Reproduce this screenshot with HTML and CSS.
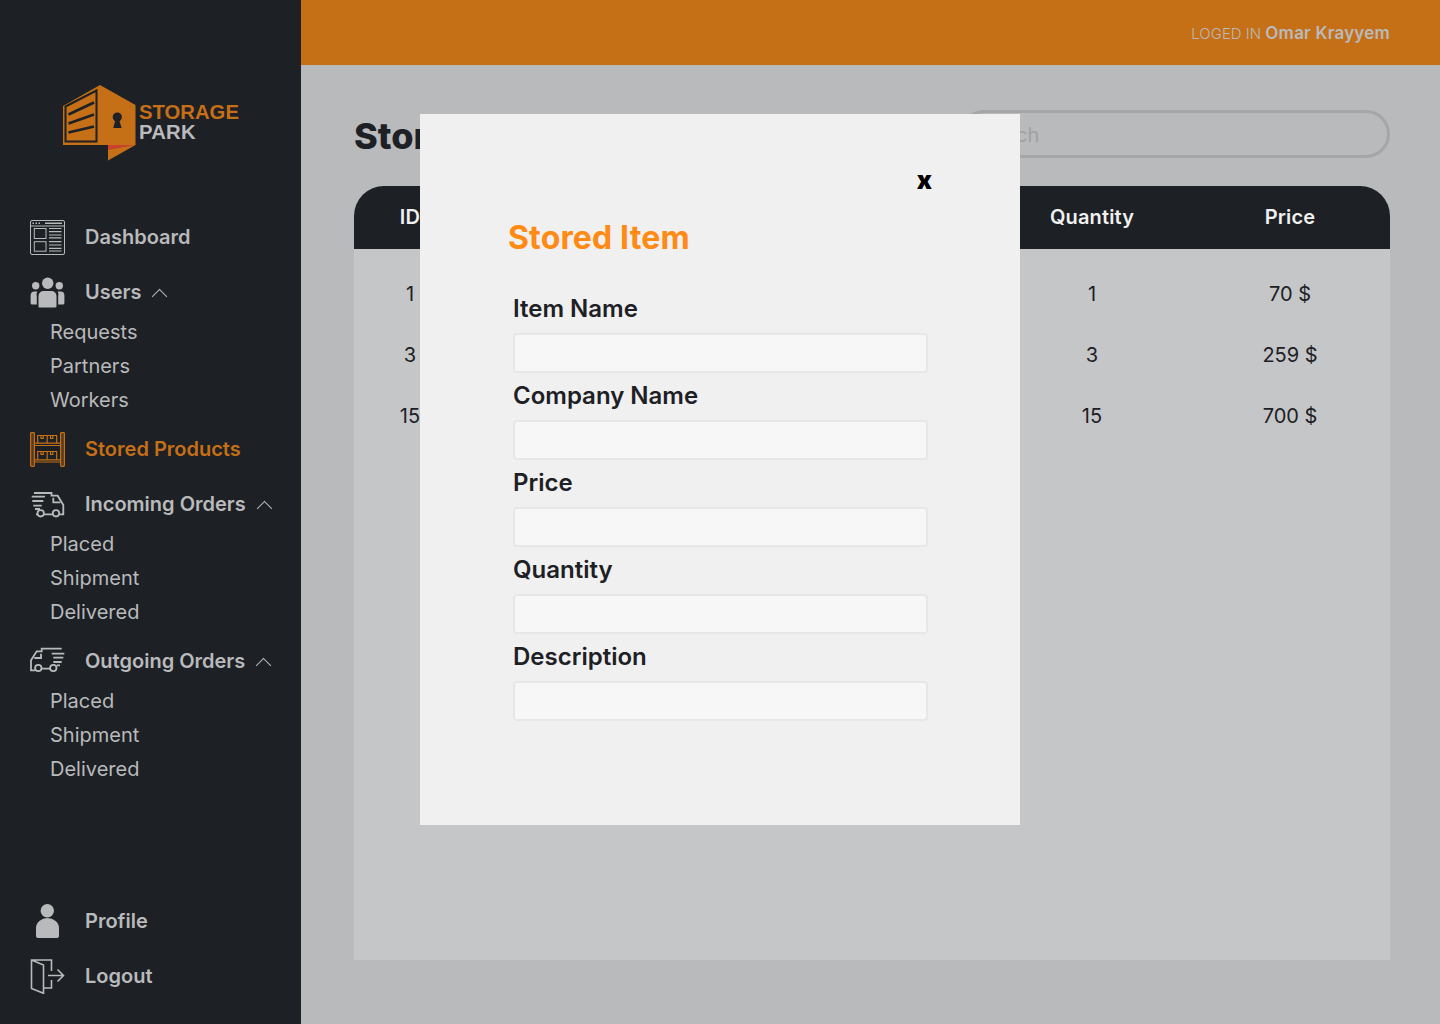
FILE: index.html
```html
<!DOCTYPE html>
<html lang="en">
<head>
    <meta charset="UTF-8">
    <meta name="viewport" content="width=device-width, initial-scale=1.0">
    <title>Storage Park - Stored Products</title>
    <link rel="stylesheet" href="styles.css">
</head>
<body>
    <div class="app">
        <aside class="sidebar">
            <div class="logo">
                <svg class="logo-mark" width="73" height="76" viewBox="0 0 73 76">
                    <polygon points="37,0 72.5,20 72.5,60 45,75.5 45,60 0,60 0,21" fill="#c56f17"/>
                    <polygon points="45,60 72,60 45,65" fill="#c9432a"/>
                    <polygon points="2.5,21.5 33.5,5.5 33.5,56.5 2.5,56.5" fill="none" stroke="#1d2025" stroke-width="2"/>
                    <path d="M5.5 29.5 31 17.5M5.5 38.5 31 29.5M5.5 47.5 31 41.5" stroke="#1d2025" stroke-width="2.8"/>
                    <circle cx="54.3" cy="32" r="4.6" fill="#1d2025"/>
                    <polygon points="53,33 55.6,33 58.6,43 50.2,43" fill="#1d2025"/>
                </svg>
                <div class="logo-text">
                    <span class="logo-top">STORAGE</span>
                    <span class="logo-bottom">PARK</span>
                </div>
            </div>

            <nav class="nav">
                <a class="nav-item">
                    <svg class="nav-icon" viewBox="0 0 35 35" fill="none" stroke="#b9babb">
                        <rect x="0.5" y="0.5" width="34" height="34" rx="1.5" stroke-width="1"/>
                        <path d="M0.5 6H34.5" stroke-width="1"/>
                        <path d="M2.5 3.2H4M5.5 3.2H7M8.5 3.2H10M15 3.2H32" stroke-width="1.4"/>
                        <rect x="4.3" y="8.5" width="11.7" height="10" stroke-width="1"/>
                        <rect x="4.3" y="21.7" width="11.7" height="9.5" stroke-width="1"/>
                        <path d="M19 8.5H31.5M19 11.7H31.5M19 15H31.5M19 17.8H31.5M19 21.7H31.5M19 25H31.5M19 28.3H31.5M19 31H31.5" stroke-width="1.2"/>
                    </svg>
                    <span>Dashboard</span>
                </a>

                <a class="nav-item">
                    <svg class="nav-icon" viewBox="0 0 35 35" fill="#b9babb">
                        <circle cx="17.7" cy="8.3" r="5.7"/>
                        <circle cx="5.7" cy="10.7" r="3.7"/>
                        <circle cx="29.3" cy="10.7" r="3.7"/>
                        <path d="M8.5 21a5 5 0 0 1 5-5h8a5 5 0 0 1 5 5v10a1.5 1.5 0 0 1-1.5 1.5h-16A1.5 1.5 0 0 1 8.5 31z"/>
                        <path d="M7.3 16.5H4.5A4 4 0 0 0 .6 20.5V28a1.5 1.5 0 0 0 1.5 1.5H6.8V21a6 6 0 0 1 .5-4.500z"/>
                        <path d="M27.7 16.5H30.5A4 4 0 0 1 34.4 20.5V28a1.5 1.5 0 0 1-1.5 1.5H28.2V21a6 6 0 0 0-.5-4.500z"/>
                    </svg>
                    <span>Users</span>
                    <i class="chevron"></i>
                </a>
                <div class="sub-list">
                    <a class="sub-item">Requests</a>
                    <a class="sub-item">Partners</a>
                    <a class="sub-item">Workers</a>
                </div>

                <a class="nav-item active">
                    <svg class="nav-icon" viewBox="0 0 35 35" fill="none" stroke="#c56f17" stroke-width="1.2">
                        <rect x="0.6" y="0.6" width="3.8" height="33.8" rx="0.8" fill="#c56f17" fill-opacity="0.35"/>
                        <rect x="30.6" y="0.6" width="3.8" height="33.8" rx="0.8" fill="#c56f17" fill-opacity="0.35"/>
                        <path d="M4.5 11.2H30.5M4.5 13.5H30.5M4.5 27.8H30.5M4.5 30H30.5"/>
                        <path d="M7.7 11.2V3.5H26.7V11.2M17.2 3.5V11.2M11 3.5V6.5H13.3V3.5M20.5 3.5V6.5H22.8V3.5"/>
                        <path d="M7.7 27.8V19.5H26.7V27.8M17.2 19.5V27.8M11 19.5V22.5H13.3V19.5M20.5 19.5V22.5H22.8V19.5"/>
                    </svg>
                    <span>Stored Products</span>
                </a>

                <a class="nav-item">
                    <svg class="nav-icon" viewBox="0 0 35 35" fill="none" stroke="#b9babb" stroke-width="1.8">
                        <path d="M4 6H21.5V8.7H27.7L33.3 18V27.3H30M23 27.3H13.5M7.3 27.3H6"/>
                        <path d="M23.3 10.7V15.3H30.3"/>
                        <circle cx="10.7" cy="26.3" r="3.2"/>
                        <circle cx="26" cy="26.3" r="3.2"/>
                        <path d="M1.7 9.7H15M2.3 14H13.3M3.3 18.7H11.7M5 22H10"/>
                    </svg>
                    <span>Incoming Orders</span>
                    <i class="chevron"></i>
                </a>
                <div class="sub-list">
                    <a class="sub-item">Placed</a>
                    <a class="sub-item">Shipment</a>
                    <a class="sub-item">Delivered</a>
                </div>

                <a class="nav-item">
                    <svg class="nav-icon" viewBox="0 0 35 35" fill="none" stroke="#b9babb" stroke-width="1.8">
                        <path d="M31.7 4.7H11.7V7.3H6.700L1 16.3V26.3H5M11.7 24.7H20"/>
                        <path d="M11 9.7V14H4.3"/>
                        <circle cx="8.3" cy="24" r="3.2"/>
                        <circle cx="23.3" cy="24" r="3.2"/>
                        <path d="M21.7 9.7H34.3M23.3 13.7H33.3M23.3 18H31.7M26.7 21.3H30"/>
                    </svg>
                    <span>Outgoing Orders</span>
                    <i class="chevron"></i>
                </a>
                <div class="sub-list">
                    <a class="sub-item">Placed</a>
                    <a class="sub-item">Shipment</a>
                    <a class="sub-item">Delivered</a>
                </div>
            </nav>

            <div class="nav nav-bottom">
                <a class="nav-item">
                    <svg class="nav-icon" viewBox="0 0 35 35" fill="#b9babb">
                        <circle cx="17.3" cy="6.7" r="6.7"/>
                        <path d="M6 24a11.5 10 0 0 1 23 0v8a2 2 0 0 1-2 2H8a2 2 0 0 1-2-2z"/>
                    </svg>
                    <span>Profile</span>
                </a>
                <a class="nav-item">
                    <svg class="nav-icon" viewBox="0 0 35 35" fill="none" stroke="#b9babb" stroke-width="1.6">
                        <path d="M13 1H1.5V29.5L13.5 34.3V6L1.500 1"/>
                        <path d="M13 1H21.5V12M21.5 21V29H13.5"/>
                        <path d="M18 16.5H33.5M27.5 10.5L33.5 16.5L27.5 22.5"/>
                    </svg>
                    <span>Logout</span>
                </a>
            </div>
        </aside>

        <div class="main">
            <header class="topbar">
                <p class="user-info">LOGED IN <strong>Omar Krayyem</strong></p>
            </header>

            <section class="content">
                <div class="content-head">
                    <h1 class="page-title">Stored Products</h1>
                    <input class="search" type="text" placeholder="Search">
                </div>

                <div class="table">
                    <div class="table-row table-header">
                        <span>ID</span>
                        <span></span>
                        <span>Quantity</span>
                        <span>Price</span>
                    </div>
                    <div class="table-body">
                        <div class="table-row">
                            <span>1</span>
                            <span></span>
                            <span>1</span>
                            <span>70 $</span>
                        </div>
                        <div class="table-row">
                            <span>3</span>
                            <span></span>
                            <span>3</span>
                            <span>259 $</span>
                        </div>
                        <div class="table-row">
                            <span>15</span>
                            <span></span>
                            <span>15</span>
                            <span>700 $</span>
                        </div>
                    </div>
                </div>
            </section>
        </div>
    </div>

    <!-- Stored item modal -->
    <div class="modal">
        <div class="modal-close">x</div>
        <h2 class="modal-title">Stored Item</h2>
        <form class="modal-form">
            <label class="field-label">Item Name</label>
            <input class="field-input" type="text">
            <label class="field-label">Company Name</label>
            <input class="field-input" type="text">
            <label class="field-label">Price</label>
            <input class="field-input" type="text">
            <label class="field-label">Quantity</label>
            <input class="field-input" type="text">
            <label class="field-label">Description</label>
            <input class="field-input" type="text">
        </form>
    </div>
</body>
</html>
```

FILE: styles.css
```css
* {
    margin: 0;
    padding: 0;
    box-sizing: border-box;
}

:root {
    --dark: #1d2025;
    --orange: #c56f17;
    --bright-orange: #ff8a14;
    --grey: #b9babb;
    --panel: #c5c6c8;
    --modal: #f0f0f0;
}

body {
    font-family: Inter, "Noto Sans", sans-serif;
    background: var(--grey);
    color: var(--dark);
}

.app {
    display: flex;
    height: 1024px;
    overflow: hidden;
}

/* Sidebar */
.sidebar {
    width: 301px;
    flex-shrink: 0;
    background: var(--dark);
    display: flex;
    flex-direction: column;
    padding: 85px 0 30px 30px;
}

.logo {
    display: flex;
    align-items: flex-start;
    gap: 3px;
    margin-left: 33px;
    height: 75px;
    margin-bottom: 60px;
}

.logo-mark {
    display: block;
}

.logo-text {
    display: flex;
    flex-direction: column;
    margin-top: 17px;
    font-family: "Liberation Sans", Arial, sans-serif;
    font-weight: 700;
    font-size: 20.3px;
    line-height: 20px;
}

.logo-top {
    color: var(--orange);
}

.logo-bottom {
    color: var(--grey);
    letter-spacing: 0.2px;
}

.nav {
    display: flex;
    flex-direction: column;
}

.nav-bottom {
    margin-top: auto;
}

.nav-item {
    display: flex;
    align-items: center;
    height: 35px;
    margin-bottom: 20px;
    font-size: 20px;
    font-weight: 600;
    color: var(--grey);
    cursor: pointer;
}

.nav-item span {
    margin-bottom: 2px;
}

.nav-bottom .nav-item:last-child {
    margin-bottom: 0;
}

.nav-item.active {
    color: var(--orange);
}

.nav-icon {
    width: 35px;
    height: 35px;
    margin-right: 20px;
    flex-shrink: 0;
}

.chevron {
    width: 11px;
    height: 11px;
    margin: 8px 0 0 13px;
    border-left: 1.7px solid var(--grey);
    border-top: 1.7px solid var(--grey);
    transform: rotate(45deg);
}

.sub-list {
    display: flex;
    flex-direction: column;
    margin: -15px 0 15px 20px;
}

.sub-item {
    height: 34px;
    line-height: 34px;
    font-size: 20px;
    color: var(--grey);
    cursor: pointer;
}

/* Main area */
.main {
    flex: 1;
    display: flex;
    flex-direction: column;
}

.topbar {
    height: 65px;
    flex-shrink: 0;
    background: var(--orange);
    display: flex;
    align-items: center;
    justify-content: flex-end;
    padding-right: 50px;
}

.user-info {
    font-size: 15px;
    font-weight: 300;
    color: var(--grey);
}

.user-info strong {
    font-weight: 600;
    font-size: 17px;
    letter-spacing: 0.2px;
}

.content {
    flex: 1;
    display: flex;
    flex-direction: column;
    padding: 45px 50px 64px 53px;
}

.content-head {
    display: flex;
    align-items: center;
    justify-content: space-between;
    margin-bottom: 28px;
}

.page-title {
    padding-top: 4px;
    font-size: 36px;
    font-weight: 800;
}

.search {
    width: 430px;
    height: 48px;
    border: 3px solid #a5a6a8;
    border-radius: 24px;
    background: transparent;
    padding: 2px 0 0 10px;
    font-family: inherit;
    font-size: 20px;
    outline: none;
}

.search::placeholder {
    color: #a0a1a3;
}

.table {
    flex: 1;
    display: flex;
    flex-direction: column;
    background: var(--panel);
    border-radius: 30px 30px 0 0;
}

.table-row {
    display: grid;
    grid-template-columns: 112px 1fr 198px 198px;
    text-align: center;
    align-items: center;
    height: 61px;
    padding: 0 1px 2px 0;
    font-size: 20px;
}

.table-header {
    height: 63px;
    background: var(--dark);
    color: #f0f0f0;
    font-weight: 600;
    letter-spacing: 0.15px;
    border-radius: 30px 30px 0 0;
}

.table-body {
    padding-top: 15px;
}

/* Modal */
.modal {
    position: fixed;
    top: 114px;
    left: 50%;
    transform: translateX(-50%);
    width: 600px;
    height: 711px;
    background: var(--modal);
    padding: 52px 92px 0 88px;
}

.modal-close {
    height: 30px;
    line-height: 28px;
    text-align: right;
    margin-right: -4px;
    font-size: 25px;
    font-weight: 900;
    color: #000;
}

.modal-title {
    margin-top: 22px;
    height: 40px;
    line-height: 40px;
    font-size: 32px;
    font-weight: 700;
    letter-spacing: 0.15px;
    color: var(--bright-orange);
}

.modal-form {
    display: flex;
    flex-direction: column;
    margin: 28px 0 0 5px;
}

.field-label {
    height: 47px;
    line-height: 45px;
    font-size: 24px;
    font-weight: 600;
}

.field-input {
    height: 40px;
    background: #f7f7f7;
    border: 2px solid #e7e7e7;
    border-radius: 4px;
    outline: none;
}
```
